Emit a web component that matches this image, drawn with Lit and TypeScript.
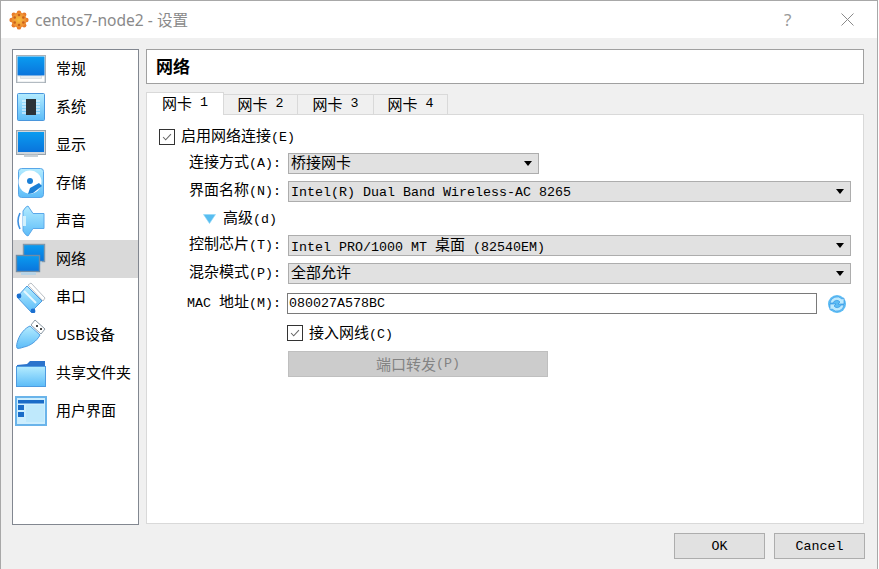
import { LitElement, html, css, svg } from "lit";
import { customElement } from "lit/decorators.js";

const split = (s: string) =>
  s.match(/[\u2E80-\u9FFF]+|[^\u2E80-\u9FFF]+/g)!.map((p) =>
    /[\u2E80-\u9FFF]/.test(p) ? html`<span class="c">${p}</span>` : html`<span class="l">${p}</span>`
  );

const defs = svg`<defs>
  <linearGradient id="scr" x1="0" y1="0" x2="0" y2="1"><stop offset="0" stop-color="#0a9cf0"/><stop offset="1" stop-color="#0a74dc"/></linearGradient>
  <linearGradient id="lb" x1="0" y1="0" x2="0" y2="1"><stop offset="0" stop-color="#b4ecff"/><stop offset="1" stop-color="#5cbcf8"/></linearGradient>
  <radialGradient id="or"><stop offset="0" stop-color="#f6c040"/><stop offset="1" stop-color="#ef8a30"/></radialGradient>
</defs>`;

const icons: Record<string, unknown> = {
  general: svg`
    <rect x="1.5" y="2.5" width="29" height="27" fill="#e6ebef" stroke="#a9b1b8"/>
    <rect x="2.5" y="3.5" width="27" height="19" fill="url(#scr)"/>
    <path d="M2.5 23h3v2.5h21V23h3v6h-27z" fill="#fff" stroke="#cdd4d9" stroke-width=".6"/>`,
  system: svg`
    <rect x="2.5" y="2.5" width="27" height="27" rx="1" fill="url(#lb)" stroke="#4a96dc"/>
    <rect x="11" y="8" width="10" height="16" fill="#2c3338"/>
    <path d="M7 10h4M7 13h4M7 16h4M7 19h4M7 22h4M21 10h4M21 13h4M21 16h4M21 19h4M21 22h4" stroke="#f4fbff" stroke-width="1.2"/>`,
  display: svg`
    <rect x="1.5" y="1.5" width="29" height="24" fill="#cfd6dc" stroke="#9aa4ac"/>
    <rect x="3" y="3" width="26" height="20" fill="url(#scr)"/>
    <rect x="9" y="25.5" width="14" height="2.5" fill="#c8d0d6"/>`,
  storage: svg`
    <rect x="3.5" y="1.5" width="25" height="29" rx="3" fill="url(#lb)" stroke="#58a6e8"/>
    <circle cx="15" cy="15" r="11.5" fill="#fff"/>
    <circle cx="15" cy="14" r="3" fill="#1b7fd6"/>
    <path d="M15 21l9-5 3 3-9 7-5 1z" fill="#1b7fd6"/>`,
  sound: svg`
    <path d="M8 6Q11 1 13 1L18 8.5H29V23.5H18L13 31Q11 31 8 26Z" fill="url(#lb)" stroke="#5aa8ea"/>
    <path d="M5 8Q1 16 5 24" fill="none" stroke="#3c8fe0" stroke-width="1.6"/>
    <rect x="8" y="11" width="3" height="10" fill="#d2f1fd"/>`,
  network: svg`
    <rect x="8.5" y="1.5" width="21" height="17" fill="url(#scr)" stroke="#7f98ac" stroke-width="1.4"/>
    <rect x="12" y="18.5" width="15" height="3" fill="#c3d8e6"/>
    <rect x="1.5" y="12.5" width="23" height="16" fill="url(#scr)" stroke="#6e8ca6" stroke-width="1.4"/>
    <rect x="6" y="29" width="15" height="3" fill="#b7d3e6"/>`,
  serial: svg`
    <path d="M13 4l3-2 14 15-2 3z" fill="#fff" stroke="#b8bec4"/>
    <path d="M12 5l15 15-11 11L2 16z" fill="url(#lb)" stroke="#4e9be0"/>
    <circle cx="4" cy="15" r="2.4" fill="#1b6fd0"/><circle cx="18" cy="30" r="2.4" fill="#1b6fd0"/>
    <path d="M9 10l12 12" stroke="#e6f7ff" stroke-width="2"/>`,
  usb: svg`
    <path d="M20 1l10 9-4 5-10-9z" fill="#fff" stroke="#8c9aa6"/>
    <rect x="21" y="6" width="2" height="2" fill="#444"/><rect x="25" y="9" width="2" height="2" fill="#444"/>
    <path d="M15 7l10 9c-3 6-10 11-16 12-3 1-6 2-7 1-1-2 0-5 1-8 2-6 7-12 12-14z" fill="url(#lb)" stroke="#4e9be0"/>`,
  folder: svg`
    <path d="M2 8l10-1 3-3h15v6H2z" fill="#2b74cc"/>
    <rect x="1.5" y="9.5" width="29" height="20" fill="url(#lb)" stroke="#4e9be0"/>`,
  ui: svg`
    <rect x="1" y="2" width="30" height="28" fill="#cdeefe" stroke="#6ab4ea" stroke-width="2"/>
    <rect x="3" y="5" width="26" height="3.5" fill="#1a6cc8"/>
    <rect x="3" y="10" width="6" height="5" fill="#1a6cc8"/><rect x="3" y="17" width="6" height="5" fill="#1a6cc8"/>
    <rect x="11" y="10" width="18" height="17" fill="#bfe9fc"/>`,
};

const nav: [string, string][] = [
  ["general", "常规"], ["system", "系统"], ["display", "显示"], ["storage", "存储"], ["sound", "声音"],
  ["network", "网络"], ["serial", "串口"], ["usb", "USB设备"], ["folder", "共享文件夹"], ["ui", "用户界面"],
];

@customElement("app-root")
export class AppRoot extends LitElement {
  static styles = css`
    :host { display: block; width: 879px; height: 569px; overflow: hidden; background: #fff;
      font-family: "Liberation Mono", "Noto Sans CJK SC", monospace; font-size: 15px; color: #000; }
    .win { width: 878px; height: 569px; box-sizing: border-box; border: 1px solid #a8a8a8; border-width: 1px 1px 0 1px;
      background: #f0f0f0; display: flex; flex-direction: column; }
    .defs { width: 0; height: 0; display: block; }
    .c { font-family: "Noto Sans CJK SC", sans-serif; font-size: 15px; }
    .l { font-family: "Liberation Mono", monospace; font-size: 13.33px; }
    .combo .l, .input .l, .btn .l, .tab .l { vertical-align: -1px; }
    .title { height: 37px; flex: none; background: #fff; display: flex; align-items: center; padding: 0 0 0 8px;
      font-family: "Noto Sans", "Noto Sans CJK SC", sans-serif; color: #8a8a8a; font-size: 15.6px; gap: 6px; }
    .title .name { flex: 1; white-space: pre; }
    .title .help { width: 14px; font-size: 17px; color: #9a9a9a; margin-right: 37px; }
    .title svg.close { margin-right: 23px; }
    .main { flex: 1; display: flex; padding: 11px 13px 0 11px; gap: 7px; min-height: 0; }
    .side { width: 127px; height: 476px; box-sizing: border-box; flex: none; background: #fff; border: 1px solid #828790; }
    .item { height: 38px; display: flex; align-items: center; padding-left: 2px; gap: 9px;
      font-family: "Noto Sans", "Noto Sans CJK SC", sans-serif; font-size: 15px; white-space: nowrap; }
    .item span { margin-bottom: 3px; }
    .item.sel { background: #d9d9d9; }
    .item svg { flex: none; }
    .right { flex: 1; min-width: 0; display: flex; flex-direction: column; }
    .head { height: 35px; box-sizing: border-box; background: #fff; border: 1px solid #a0a0a0; display: flex; align-items: center;
      padding: 0 0 2px 9px; font-family: "Noto Sans CJK SC", sans-serif; font-weight: 700; font-size: 17px; }
    .tabs { display: flex; margin-top: 8px; height: 22px; align-items: flex-end; position: relative; z-index: 1; }
    .tab { height: 20px; box-sizing: border-box; border: 1px solid #d9d9d9; border-left: 0; border-bottom: 0; background: #f0f0f0;
      display: flex; align-items: center; justify-content: center; white-space: pre; line-height: 1; padding-bottom: 2px; }
    .tab.on { height: 23px; background: #fff; border-left: 1px solid #d9d9d9; margin-bottom: -1px; padding-bottom: 3px; }
    .w78 { width: 78px; } .w74 { width: 74px; } .w76 { width: 76px; }
    .panel { height: 410px; box-sizing: border-box; background: #fff; border: 1px solid #d9d9d9; padding: 14px 12px 0 12px; }
    .chk { width: 16px; height: 16px; box-sizing: border-box; border: 1px solid #333; background: #fff; flex: none; display: block; }
    .enable { display: flex; align-items: center; gap: 6px; height: 16px; white-space: pre; }
    .enable span.t { margin-bottom: 4px; }
    .row { display: flex; align-items: center; height: 21px; white-space: pre; }
    .lbl { width: 122px; margin: 0 7px 3px 0; text-align: right; flex: none; line-height: 21px; }
    .combo { box-sizing: border-box; height: 21px; background: #e1e1e1; border: 1px solid #adadad; display: flex; align-items: center;
      padding: 0 6px 0 2px; line-height: 1; }
    .combo .v { flex: 1; white-space: pre; }
    .combo .v.cjk { margin-bottom: 2px; }
    .short { width: 251px; } .long { width: 563px; }
    .arrow { width: 0; height: 0; border: 4px solid transparent; border-top: 5px solid #000; border-bottom: 0; flex: none; }
    .m8 { margin-top: 8px; } .m7 { margin-top: 7px; } .m5 { margin-top: 5px; } .m9 { margin-top: 9px; }
    .adv { padding-left: 44px; display: flex; align-items: center; gap: 7px; margin-bottom: 2px; }
    .adv span { margin-bottom: 4px; }
    .input { box-sizing: border-box; width: 530px; height: 21px; border: 1px solid #7a7a7a; background: #fff; display: flex; align-items: center; padding-left: 1px; margin-left: -1px; }
    .refresh { margin-left: 10px; flex: none; }
    .cable { display: flex; align-items: center; gap: 6px; height: 16px; margin: 11px 0 0 128px; white-space: pre; }
    .cable span.t { margin-bottom: 2px; }
    .pf { width: 260px; height: 26px; box-sizing: border-box; margin: 10px 0 0 129px; padding-bottom: 2px; background: #ccc; border: 1px solid #bfbfbf;
      color: #838383; display: flex; align-items: center; justify-content: center; white-space: pre; }
    .foot { height: 44px; flex: none; display: flex; justify-content: flex-end; gap: 9px; padding: 8px 12px 0 0; box-sizing: border-box; }
    .btn { width: 91px; height: 26px; box-sizing: border-box; background: #e1e1e1; border: 1px solid #adadad; display: flex; align-items: center; justify-content: center; }
  `;

  private check() {
    return html`<svg class="chk" viewBox="0 0 16 16"><path d="M3.5 8l3 3.2 6-6.4" fill="none" stroke="#666" stroke-width="1.2"/></svg>`;
  }

  render() {
    return html`<div class="win">
      <svg class="defs">${defs}</svg>
      <div class="title">
        <svg width="20" height="20" viewBox="0 0 20 20">
          <g fill="#e87a2a"><circle cx="10" cy="2.6" r="2.2"/><circle cx="15.2" cy="4.8" r="2.2"/><circle cx="17.4" cy="10" r="2.2"/><circle cx="15.2" cy="15.2" r="2.2"/><circle cx="10" cy="17.4" r="2.2"/><circle cx="4.8" cy="15.2" r="2.2"/><circle cx="2.6" cy="10" r="2.2"/><circle cx="4.8" cy="4.8" r="2.2"/></g>
          <circle cx="10" cy="10" r="7.6" fill="url(#or)"/>
          <g fill="#c9601c"><circle cx="10" cy="5" r="1.3"/><circle cx="14.3" cy="7.5" r="1.3"/><circle cx="14.3" cy="12.5" r="1.3"/><circle cx="10" cy="15" r="1.3"/><circle cx="5.7" cy="12.5" r="1.3"/><circle cx="5.7" cy="7.5" r="1.3"/></g>
        </svg>
        <span class="name">centos7-node2 - 设置</span>
        <span class="help">?</span>
        <svg class="close" width="13" height="13" viewBox="0 0 13 13"><path d="M.5.5l12 12M12.5.5l-12 12" stroke="#8a8a8a" fill="none"/></svg>
      </div>
      <div class="main">
        <div class="side">
          ${nav.map(([k, t]) => html`<div class="item ${k === "network" ? "sel" : ""}">
            <svg width="32" height="32" viewBox="0 0 32 32">${icons[k]}</svg><span>${t}</span></div>`)}
        </div>
        <div class="right">
          <div class="head">网络</div>
          <div class="tabs">
            <div class="tab on w78">${split("网卡 1")}</div>
            <div class="tab w74">${split("网卡 2")}</div>
            <div class="tab w76">${split("网卡 3")}</div>
            <div class="tab w74">${split("网卡 4")}</div>
          </div>
          <div class="panel">
            <div class="enable">${this.check()}<span class="t">${split("启用网络连接(E)")}</span></div>
            <div class="row m8"><span class="lbl">${split("连接方式(A):")}</span>
              <div class="combo short"><span class="v cjk">${split("桥接网卡")}</span><span class="arrow"></span></div></div>
            <div class="row m7"><span class="lbl">${split("界面名称(N):")}</span>
              <div class="combo long"><span class="v">${split("Intel(R) Dual Band Wireless-AC 8265")}</span><span class="arrow"></span></div></div>
            <div class="row m7"><div class="adv">
              <svg width="13" height="10" viewBox="0 0 13 10"><path d="M.5.5h12L6.5 9.5z" fill="#58bdf0" stroke="#8fd6f8" stroke-width=".6"/></svg>
              <span>${split("高级(d)")}</span></div></div>
            <div class="row m5"><span class="lbl">${split("控制芯片(T):")}</span>
              <div class="combo long"><span class="v">${split("Intel PRO/1000 MT 桌面 (82540EM)")}</span><span class="arrow"></span></div></div>
            <div class="row m7"><span class="lbl">${split("混杂模式(P):")}</span>
              <div class="combo long"><span class="v cjk">${split("全部允许")}</span><span class="arrow"></span></div></div>
            <div class="row m9"><span class="lbl">${split("MAC 地址(M):")}</span>
              <div class="input">${split("080027A578BC")}</div>
              <svg class="refresh" width="20" height="20" viewBox="0 0 20 20">
                <circle cx="10" cy="10" r="9" fill="#5cbcf4"/>
                <path d="M3 9a7 7 0 0 1 12-4l2-1v6h-6l2-2a4 4 0 0 0-7 1zM17 11a7 7 0 0 1-12 4l-2 1v-6h6l-2 2a4 4 0 0 0 7-1z" fill="#bdeafe" stroke="#2b8fe0" stroke-width=".6"/>
              </svg>
            </div>
            <div class="cable">${this.check()}<span class="t">${split("接入网线(C)")}</span></div>
            <div class="pf">${split("端口转发(P)")}</div>
          </div>
        </div>
      </div>
      <div class="foot">
        <div class="btn">${split("OK")}</div>
        <div class="btn">${split("Cancel")}</div>
      </div>
    </div>`;
  }
}
